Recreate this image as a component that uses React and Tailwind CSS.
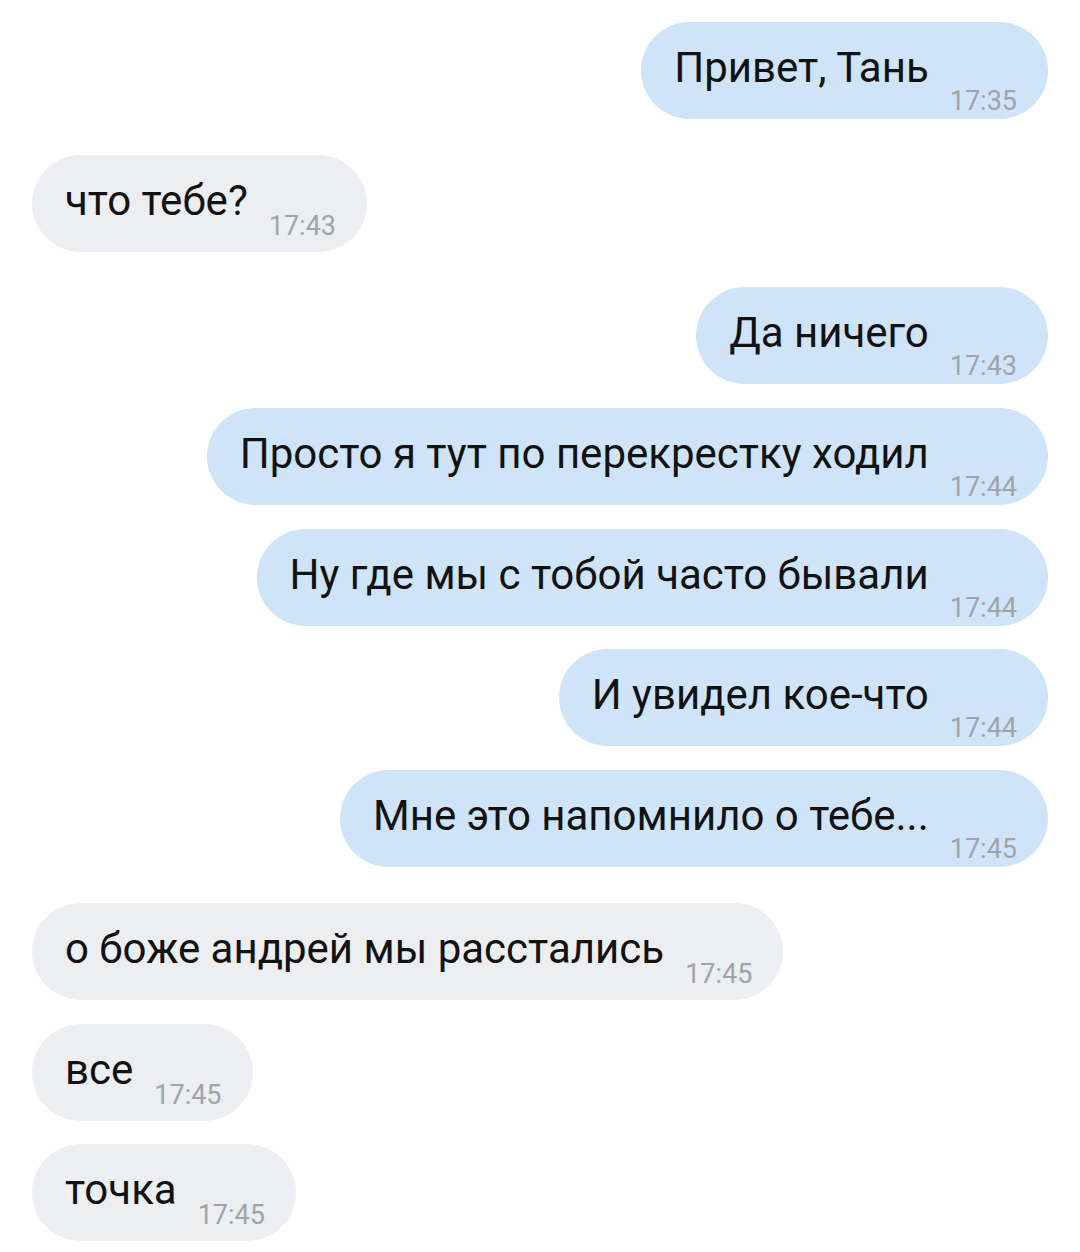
import React from 'react';

const messages = [
    { text: 'Привет, Тань', time: '17:35', out: true },
    { text: 'что тебе?', time: '17:43', out: false },
    { text: 'Да ничего', time: '17:43', out: true },
    { text: 'Просто я тут по перекрестку ходил', time: '17:44', out: true },
    { text: 'Ну где мы с тобой часто бывали', time: '17:44', out: true },
    { text: 'И увидел кое-что', time: '17:44', out: true },
    { text: 'Мне это напомнило о тебе...', time: '17:45', out: true },
    { text: 'о боже андрей мы расстались', time: '17:45', out: false },
    { text: 'все', time: '17:45', out: false },
    { text: 'точка', time: '17:45', out: false },
];

function Bubble({ msg, first, sameSide }) {
    const spacing = first ? 'mt-0' : sameSide ? 'mt-[23.7px]' : 'mt-[35.7px]';
    return (
        <div className={`flex ${msg.out ? 'justify-end' : 'justify-start'} ${spacing}`}>
            <div
                className={`flex items-start h-[97px] rounded-full pl-[33px] pr-[31px] pt-[25px] ${
                    msg.out ? 'bg-[#cfe4f8]' : 'bg-[#eceef1]'
                }`}
            >
                <span className="text-[42px] leading-[42px] text-[#121212] whitespace-nowrap">
                    {msg.text}
                </span>
                <span
                    className={`ml-[21px] text-[27px] leading-[27px] text-[#a0a4a9] whitespace-nowrap ${
                        msg.out ? 'mt-[41px]' : 'mt-[33px]'
                    }`}
                >
                    {msg.time}
                </span>
            </div>
        </div>
    );
}

export default function App() {
    return (
        <div
            className="w-[1080px] h-[1252px] bg-white px-[32px] pt-[22px] overflow-hidden"
            style={{ fontFamily: 'Roboto, "Noto Sans", sans-serif' }}
        >
            {messages.map((msg, i) => (
                <Bubble
                    key={i}
                    msg={msg}
                    first={i === 0}
                    sameSide={i > 0 && messages[i - 1].out === msg.out}
                />
            ))}
        </div>
    );
}
